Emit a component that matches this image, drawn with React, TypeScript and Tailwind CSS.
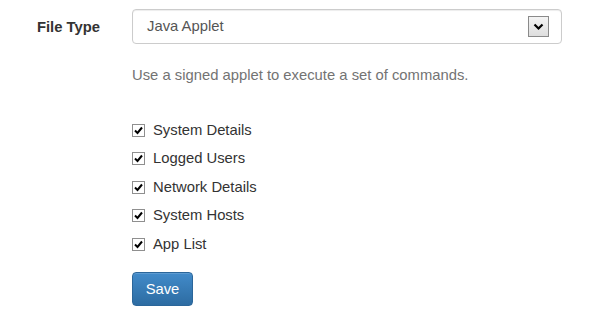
import React from "react";

const options = ["System Details", "Logged Users", "Network Details", "System Hosts", "App List"];

const CheckBox = () => (
  <span className="flex h-[13px] w-[13px] items-center justify-center border border-[#8f8f8f] bg-white">
    <svg width="9" height="9" viewBox="0 0 9 9">
      <path d="M1 4.5 L3.5 7 L8 1.5" fill="none" stroke="#000" strokeWidth="2" />
    </svg>
  </span>
);

export default function App() {
  return (
    <div className="h-[319px] w-[600px] bg-white font-['Liberation_Sans',Arial,sans-serif] text-[14.8px] text-[#333]">
      <div className="flex items-start pt-[9px]">
        <label className="w-[100px] pt-[7px] text-right font-bold">File Type</label>
        <div className="ml-[32px] w-[430px]">
          <div className="flex h-[35px] items-center justify-between rounded-[4px] border border-[#ccc] pl-[14px] pr-[12px] shadow-[inset_0_1px_1px_rgba(0,0,0,0.075)]">
            <span className="text-[#555]">Java Applet</span>
            <span className="flex h-[21px] w-[21px] items-center justify-center border border-[#8a8a8a] bg-gradient-to-b from-[#f4f4f4] to-[#dedede]">
              <svg width="11" height="8" viewBox="0 0 11 8">
                <path d="M1.5 1.5 L5.5 5.5 L9.5 1.5" fill="none" stroke="#000" strokeWidth="2.2" />
              </svg>
            </span>
          </div>
          <p className="mt-[21px] leading-5 text-[#737373]">Use a signed applet to execute a set of commands.</p>
          <div className="mt-[35px] flex flex-col gap-[8.5px]">
            {options.map((o) => (
              <div key={o} className="flex h-[20px] items-center gap-[8px]">
                <CheckBox />
                <span>{o}</span>
              </div>
            ))}
          </div>
          <button className="mt-[18px] h-[34px] w-[61px] rounded-[4px] border border-[#2b669a] bg-gradient-to-b from-[#428bca] to-[#2d6ca2] text-white shadow-[inset_0_1px_0_rgba(255,255,255,0.15)]">
            Save
          </button>
        </div>
      </div>
    </div>
  );
}
